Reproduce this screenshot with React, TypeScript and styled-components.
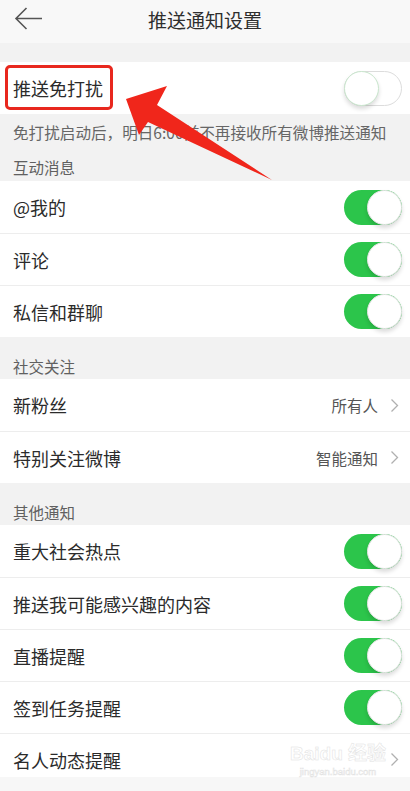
import React from 'react';
import styled, { createGlobalStyle } from 'styled-components';

const GlobalStyle = createGlobalStyle`
    body {
        margin: 0;
        background: #f2f2f2;
        font-family: 'Noto Sans CJK SC', 'Noto Sans', sans-serif;
        color: #333;
    }
`;

const GREEN = '#2cc54b';

const Page = styled.div`
    position: relative;
    width: 410px;
    height: 791px;
    overflow: hidden;
    background: #f2f2f2;
`;

const Header = styled.div`
    position: relative;
    height: 43px;
    display: flex;
    align-items: center;
    justify-content: center;
    background: #f8f8f8;
    padding-bottom: 4px;
    box-sizing: border-box;
`;

const Title = styled.div`
    font-size: 19px;
    line-height: 24px;
    color: #2e2e2e;
`;

const BackButton = styled.div`
    position: absolute;
    left: 14px;
    top: 6px;
    width: 30px;
    height: 26px;
`;

const Spacer = styled.div`
    height: 19px;
`;

const Group = styled.div`
    background: #fff;
`;

interface RowProps {
    $last?: boolean;
}

const Row = styled.div<RowProps>`
    height: ${p => (p.$last ? '44px' : '52px')};
    padding: ${p => (p.$last ? '8px 8px 0 13px' : '0 8px 0 13px')};
    box-sizing: border-box;
    display: flex;
    align-items: center;
    justify-content: space-between;
    border-top: 1px solid #ededed;

    &:first-child {
        border-top: none;
    }
`;

const Label = styled.span`
    font-size: 18px;
    line-height: 22px;
    color: #2b2b2b;
`;

const Highlight = styled(Label)`
    position: relative;
    display: inline-block;

    &::after {
        content: '';
        position: absolute;
        top: -12px;
        bottom: -11px;
        left: -8px;
        right: -10px;
        border: 3px solid #e8281e;
        border-radius: 5px;
    }
`;

const Note = styled.div`
    padding: 7px 13px 9px;
    font-size: 15.6px;
    line-height: 22px;
    color: #666;
    white-space: nowrap;
`;

interface SectionProps {
    $compact?: boolean;
}

const SectionTitle = styled.div<SectionProps>`
    padding: ${p => (p.$compact ? '4px 13px 3px' : '18px 13px 2px')};
    font-size: 15.5px;
    line-height: 22px;
    color: #606060;
`;

interface SwitchProps {
    $on: boolean;
}

const Switch = styled.div<SwitchProps>`
    position: relative;
    width: 58px;
    height: 35px;
    border-radius: 18px;
    box-sizing: border-box;
    background: ${p => (p.$on ? GREEN : '#fff')};
    border: ${p => (p.$on ? 'none' : '1px solid #dcdcdc')};
`;

const Knob = styled.div<SwitchProps>`
    position: absolute;
    top: ${p => (p.$on ? '0' : '-1px')};
    left: ${p => (p.$on ? '23px' : '-1px')};
    width: 35px;
    height: 35px;
    border-radius: 50%;
    background: #fff;
    box-sizing: border-box;
    border: 1px solid ${p => (p.$on ? '#e4e4e4' : '#c9e6cd')};
    box-shadow: 0 3px 4px rgba(0, 0, 0, 0.14);
`;

const Value = styled.div`
    display: flex;
    align-items: center;
    gap: 12px;
    padding-right: 3px;
    font-size: 15.5px;
    line-height: 22px;
    color: #555;
`;

const Footer = styled.div`
    height: 14px;
    background: #f7f7f7;
`;

const Pointer = styled.svg`
    position: absolute;
    left: 120px;
    top: 80px;
`;

const Watermark = styled.div`
    position: absolute;
    left: 292px;
    top: 742px;
    width: 92px;
    display: flex;
    flex-direction: column;
    align-items: center;
    white-space: nowrap;
    color: #fff;
    -webkit-text-stroke: 0.5px #e2e2e2;
    font-family: 'Liberation Sans', 'Noto Sans CJK SC', sans-serif;
    pointer-events: none;
`;

const WatermarkMain = styled.div`
    font-size: 19px;
    line-height: 24px;
    font-weight: bold;
`;

const WatermarkSub = styled.div`
    font-size: 9.5px;
    line-height: 11px;
`;

const Toggle = ({ on }: { on: boolean }) => (
    <Switch $on={on}>
        <Knob $on={on} />
    </Switch>
);

const Chevron = () => (
    <svg width="9" height="15" viewBox="0 0 9 15">
        <path d="M1.5 1.5 L7.5 7.5 L1.5 13.5" fill="none" stroke="#b0b0b0" strokeWidth="1.3" />
    </svg>
);

const App = () => (
    <Page>
        <GlobalStyle />
        <Header>
            <BackButton>
                <svg width="30" height="26" viewBox="0 0 30 26">
                    <path
                        d="M28 12.5 H2 M12.5 2 L2 12.5 L12.5 23"
                        fill="none"
                        stroke="#555"
                        strokeWidth="1.6"
                    />
                </svg>
            </BackButton>
            <Title>推送通知设置</Title>
        </Header>
        <Spacer />
        <Group>
            <Row>
                <Highlight>推送免打扰</Highlight>
                <Toggle on={false} />
            </Row>
        </Group>
        <Note>免打扰启动后，明日6:00前不再接收所有微博推送通知</Note>
        <SectionTitle $compact>互动消息</SectionTitle>
        <Group>
            <Row>
                <Label>@我的</Label>
                <Toggle on />
            </Row>
            <Row>
                <Label>评论</Label>
                <Toggle on />
            </Row>
            <Row>
                <Label>私信和群聊</Label>
                <Toggle on />
            </Row>
        </Group>
        <SectionTitle>社交关注</SectionTitle>
        <Group>
            <Row>
                <Label>新粉丝</Label>
                <Value>
                    所有人
                    <Chevron />
                </Value>
            </Row>
            <Row>
                <Label>特别关注微博</Label>
                <Value>
                    智能通知
                    <Chevron />
                </Value>
            </Row>
        </Group>
        <SectionTitle>其他通知</SectionTitle>
        <Group>
            <Row>
                <Label>重大社会热点</Label>
                <Toggle on />
            </Row>
            <Row>
                <Label>推送我可能感兴趣的内容</Label>
                <Toggle on />
            </Row>
            <Row>
                <Label>直播提醒</Label>
                <Toggle on />
            </Row>
            <Row>
                <Label>签到任务提醒</Label>
                <Toggle on />
            </Row>
            <Row $last>
                <Label>名人动态提醒</Label>
                <Value>
                    <Chevron />
                </Value>
            </Row>
        </Group>
        <Footer />
        <Pointer width="160" height="105" viewBox="0 0 160 105">
            <polygon points="6,19 47,6 37,25 152,100 28,42 19,55" fill="#f0261b" />
        </Pointer>
        <Watermark>
            <WatermarkMain>Baidu 经验</WatermarkMain>
            <WatermarkSub>jingyan.baidu.com</WatermarkSub>
        </Watermark>
    </Page>
);

export default App;
